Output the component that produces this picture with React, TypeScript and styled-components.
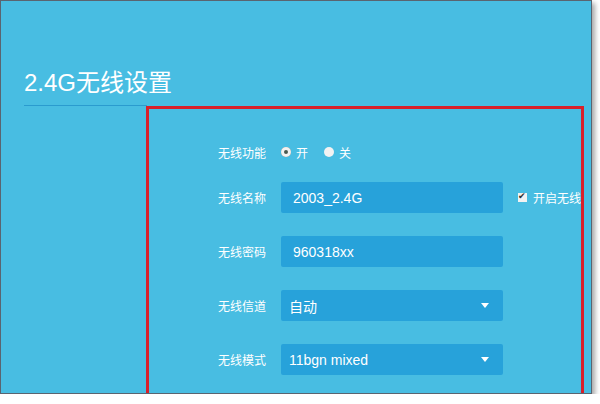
import styled, { createGlobalStyle } from 'styled-components';

const Global = createGlobalStyle`
  body {
    margin: 0;
    background: #ffffff;
    font-family: "Noto Sans CJK SC", "Liberation Sans", sans-serif;
  }
`;

const Frame = styled.div`
  width: 590px;
  height: 392px;
  background: #48bde2;
  border: 1px solid #5a6470;
  box-shadow: 3px 3px 5px rgba(0, 0, 0, 0.35);
  overflow: hidden;
  color: #ffffff;
`;

const Header = styled.div`
  margin-left: 23px;
  width: 123px;
  height: 105px;
  box-sizing: border-box;
  padding-top: 67px;
  border-bottom: 1px solid #2a9bcf;
  white-space: nowrap;
  font-size: 24px;
  line-height: 30px;
  font-family: "Liberation Sans", "Noto Sans CJK SC", sans-serif;
`;

const RedBox = styled.div`
  margin-left: 145px;
  width: 438px;
  height: 320px;
  box-sizing: border-box;
  border: 3px solid #d8202a;
  overflow: hidden;
  padding-top: 36px;
`;

const Form = styled.div`
  display: grid;
  grid-template-columns: 117px 222px max-content;
  grid-template-rows: 14px repeat(4, 31px);
  column-gap: 15px;
  row-gap: 23px;
  align-items: center;
`;

const Label = styled.div`
  text-align: right;
  font-size: 12px;
`;

const Radios = styled.div`
  display: flex;
  align-items: center;
  gap: 16px;
  font-size: 12px;
`;

const RadioItem = styled.label`
  display: flex;
  align-items: center;
  gap: 5px;
`;

const Dot = styled.span<{ $on?: boolean }>`
  width: 10px;
  height: 10px;
  border-radius: 50%;
  background: #f2f2f2;
  box-sizing: border-box;
  box-shadow: ${(p) => (p.$on ? 'inset 0 0 0 3px #f2f2f2, inset 0 0 0 5px #4a5a50' : 'none')};
`;

const Field = styled.div<{ $select?: boolean }>`
  height: 31px;
  background: #27a2da;
  border-radius: 2px;
  display: flex;
  align-items: center;
  justify-content: space-between;
  padding: 0 ${(p) => (p.$select ? '14px' : '12px')} 0 ${(p) => (p.$select ? '8px' : '12px')};
  box-sizing: border-box;
  font-size: 14px;
  font-family: "Liberation Sans", "Noto Sans CJK SC", sans-serif;
`;

const Caret = styled.span`
  width: 0;
  height: 0;
  border-left: 4px solid transparent;
  border-right: 4px solid transparent;
  border-top: 5px solid #ffffff;
`;

const Check = styled.div`
  display: flex;
  align-items: center;
  gap: 6px;
  font-size: 12px;
  white-space: nowrap;
`;

const Box = styled.span`
  width: 9px;
  height: 9px;
  background: #f2f2f2;
  position: relative;
  &::after {
    content: '✔';
    position: absolute;
    left: 0;
    top: -4px;
    font-size: 9px;
    color: #333;
  }
`;

export default function App() {
  return (
    <>
      <Global />
      <Frame>
        <Header>2.4G无线设置</Header>
        <RedBox>
          <Form>
            <Label>无线功能</Label>
            <Radios>
              <RadioItem><Dot $on />开</RadioItem>
              <RadioItem><Dot />关</RadioItem>
            </Radios>
            <span />
            <Label>无线名称</Label>
            <Field>2003_2.4G</Field>
            <Check><Box />开启无线广播</Check>
            <Label>无线密码</Label>
            <Field>960318xx</Field>
            <span />
            <Label>无线信道</Label>
            <Field $select>自动<Caret /></Field>
            <span />
            <Label>无线模式</Label>
            <Field $select>11bgn mixed<Caret /></Field>
            <span />
          </Form>
        </RedBox>
      </Frame>
    </>
  );
}
